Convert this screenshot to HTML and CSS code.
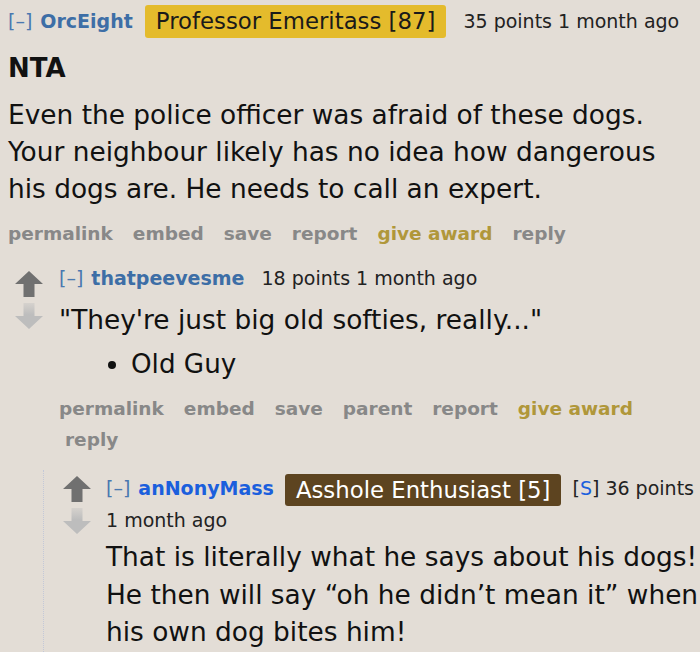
FILE: index.html
```html
<!DOCTYPE html>
<html>
<head>
<meta charset="utf-8">
<link rel="stylesheet" href="styles.css">
</head>
<body>
<div class="thread">
  <div class="comment top">
    <div class="entry">
      <div class="tagline"><span class="expand">[–]</span><a class="author">OrcEight</a><span class="flair flair-gold">Professor Emeritass [87]</span><span class="meta">35 points <span class="time">1 month ago</span></span></div>
      <div class="md">
        <p class="nta">NTA</p>
        <p>Even the police officer was afraid of these dogs. Your neighbour likely has no idea how dangerous his dogs are. He needs to call an expert.</p>
      </div>
      <ul class="buttons">
        <li>permalink</li>
        <li>embed</li>
        <li>save</li>
        <li>report</li>
        <li class="award">give award</li>
        <li>reply</li>
      </ul>
    </div>

    <div class="comment level1">
      <div class="midcol">
        <svg class="arrow" viewBox="0 0 28 26"><path d="M14 0 L28 13 L19.5 13 L19.5 26 L8.5 26 L8.5 13 L0 13 Z" fill="#707070"/></svg>
        <svg class="arrow" viewBox="0 0 28 26"><defs><linearGradient id="g1" x1="0" y1="0" x2="0" y2="1"><stop offset="0" stop-color="#bdbdbd" stop-opacity="0.35"/><stop offset="0.45" stop-color="#bdbdbd"/></linearGradient></defs><path d="M14 26 L28 13 L19.5 13 L19.5 0 L8.5 0 L8.5 13 L0 13 Z" fill="url(#g1)"/></svg>
      </div>
      <div class="entry">
        <div class="tagline"><span class="expand">[–]</span><a class="author">thatpeevesme</a><span class="meta">18 points <span class="time">1 month ago</span></span></div>
        <div class="md">
          <p>"They're just big old softies, really..."</p>
          <ul class="bullets"><li>Old Guy</li></ul>
        </div>
        <ul class="buttons">
          <li>permalink</li>
          <li>embed</li>
          <li>save</li>
          <li>parent</li>
          <li>report</li>
          <li class="award">give award</li>
          <li>reply</li>
        </ul>
      </div>
    </div>

    <div class="child">
      <div class="comment level2">
        <div class="midcol">
          <svg class="arrow" viewBox="0 0 28 26"><path d="M14 0 L28 13 L19.5 13 L19.5 26 L8.5 26 L8.5 13 L0 13 Z" fill="#707070"/></svg>
          <svg class="arrow" viewBox="0 0 28 26"><defs><linearGradient id="g2" x1="0" y1="0" x2="0" y2="1"><stop offset="0" stop-color="#bdbdbd" stop-opacity="0.35"/><stop offset="0.45" stop-color="#bdbdbd"/></linearGradient></defs><path d="M14 26 L28 13 L19.5 13 L19.5 0 L8.5 0 L8.5 13 L0 13 Z" fill="url(#g2)"/></svg>
        </div>
        <div class="entry">
          <div class="tagline"><span class="expand">[–]</span><a class="author submitter">anNonyMass</a><span class="flair flair-brown">Asshole Enthusiast [5]</span><span class="meta meta-s">[<span class="s">S</span>] 36 points <span class="time">1 month ago</span></span></div>
          <div class="md">
            <p>That is literally what he says about his dogs! He then will say “oh he didn’t mean it” when his own dog bites him!</p>
          </div>
        </div>
      </div>
    </div>
  </div>
</div>
</body>
</html>
```

FILE: styles.css
```css
html, body {
  margin: 0;
  padding: 0;
  background: #e3ddd6;
}
body {
  padding: 0 0 0 8px;
  font-family: "DejaVu Sans", Verdana, sans-serif;
  color: #111;
  overflow: hidden;
  height: 652px;
}
.thread {
  width: 692px;
}
.tagline {
  font-size: 19px;
  line-height: 33px;
  color: #222;
}
.expand {
  color: #4a78b0;
  margin-right: 8px;
}
.author {
  color: #3d6ea6;
  font-weight: bold;
  margin-right: 12px;
}
.author.submitter {
  color: #1b5fdd;
  margin-right: 11px;
}
.flair {
  display: inline-block;
  font-size: 22.8px;
  line-height: 33px;
  padding: 0 11px;
  border-radius: 3px;
  vertical-align: top;
}
.flair-gold {
  background: #e4bb2c;
  color: #1a1a1a;
  margin-right: 17px;
}
.flair-brown {
  background: #5d4420;
  color: #fff;
  margin-right: 11px;
}
.meta {
  color: #222;
}
.author + .meta {
  margin-left: 5px;
}
.time {
  white-space: nowrap;
}
.s {
  color: #1b5fdd;
}
.top > .entry .tagline {
  margin-top: 5px;
}
.md p {
  margin: 0;
  font-size: 26.4px;
  line-height: 37px;
}
.md p.nta {
  font-weight: bold;
  font-size: 26px;
  line-height: 32px;
  margin: 14px 0 12px;
}
.buttons {
  list-style: none;
  margin: 0;
  padding: 0;
  display: flex;
  flex-wrap: wrap;
  font-size: 18.5px;
  font-weight: bold;
  line-height: 31px;
  color: #888;
}
.buttons li {
  padding: 0 14px 0 6px;
}
.buttons li:first-child {
  padding-left: 0;
}
.buttons .award {
  color: #b0973a;
}
.top > .entry .buttons {
  margin-top: 11px;
}
.comment.level1 {
  display: flex;
  margin-top: 13px;
}
.midcol {
  display: flex;
  flex-direction: column;
  gap: 6px;
}
.level1 > .midcol {
  margin-left: 7px;
  margin-right: 16px;
  padding-top: 9px;
}
.level1 > .entry {
  flex: 1;
}
.arrow {
  width: 28px;
  height: 26px;
  display: block;
}
.level1 .md p {
  margin-top: 6px;
}
.bullets {
  margin: 8px 0 10px;
  padding-left: 72px;
  font-size: 26.2px;
  line-height: 37px;
}
.child {
  margin-left: 35px;
  margin-top: 15px;
  padding-top: 4px;
  border-left: 1px dotted #c3c8d8;
  min-height: 200px;
}
.comment.level2 {
  display: flex;
}
.level2 > .midcol {
  margin-left: 19px;
  margin-right: 15px;
  padding-top: 2px;
}
.level2 > .entry {
  flex: 1;
  margin-right: -8px;
}
.level2 .tagline {
  line-height: 28px;
}
.level2 .flair {
  line-height: 32px;
}
.level2 .md p {
  margin-top: 4px;
  line-height: 37.5px;
}
```
